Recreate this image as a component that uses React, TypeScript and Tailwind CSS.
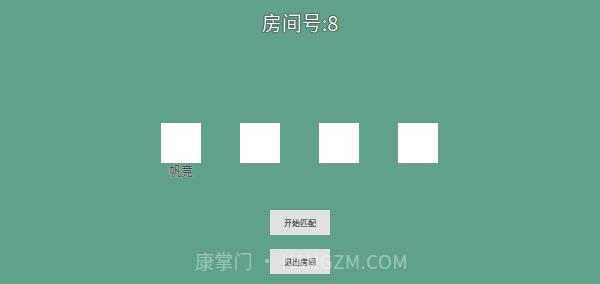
import React from "react";

export default function App() {
  const slots = ["帆竞", "", "", ""];
  return (
    <div
      className="relative w-[600px] h-[284px] overflow-hidden bg-[#5fa18a] flex flex-col items-center"
      style={{ fontFamily: '"Noto Sans CJK SC", "Noto Sans", sans-serif' }}
    >
      <div className="pt-[11px] text-[20px] leading-[24px] text-white [text-shadow:0_0_1px_#111,0_0_1px_#111,0_0_1px_#111]">
        房间号:8
      </div>
      <div className="mt-[88px] -ml-[1px] flex items-start gap-[39px]">
        {slots.map((name, i) => (
          <div key={i} className="flex w-[40px] flex-col items-center">
            <div className="h-[40px] w-[40px] bg-white" />
            <div className="mt-[1px] h-[14px] whitespace-nowrap text-[12px] leading-[14px] text-[#2a2a2a] [text-shadow:0_0_1px_#fff,0_0_1px_#fff]">
              {name}
            </div>
          </div>
        ))}
      </div>
      <div className="mt-[32px] flex flex-col items-center gap-[14px]">
        <div className="flex h-[25px] w-[60px] items-center justify-center bg-[#e1e1e1] text-[8px] text-[#111]">
          开始匹配
        </div>
        <div className="flex h-[25px] w-[60px] items-center justify-center bg-[#e1e1e1] text-[8px] text-[#111]">
          退出房间
        </div>
      </div>
      <div className="pointer-events-none absolute left-[195px] top-[249px] whitespace-nowrap text-[19px] leading-[24px] tracking-[0.3px] text-white/40">
        康掌门 • KANGZM.COM
      </div>
    </div>
  );
}
